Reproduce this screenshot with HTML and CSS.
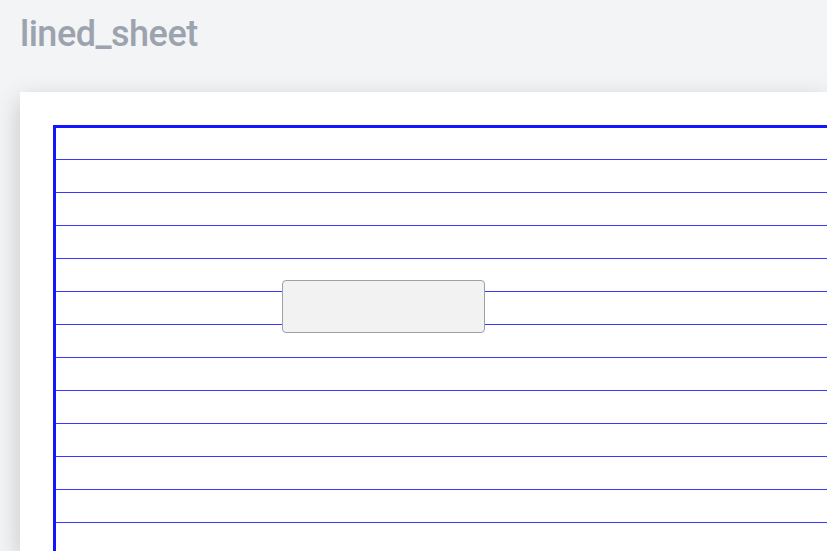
FILE: index.html
```html
<!DOCTYPE html>
<html lang="en">
<head>
<meta charset="utf-8">
<title>lined_sheet</title>
<link rel="stylesheet" href="styles.css">
</head>
<body>
<header class="page-header">
  <h1 class="page-title">lined_sheet</h1>
</header>
<main class="card">
  <div class="sheet">
    <input class="field" type="text" aria-label="text">
  </div>
</main>
</body>
</html>
```

FILE: styles.css
```css
html, body {
  margin: 0;
  padding: 0;
  height: 100%;
  overflow: hidden;
}
body {
  background: #f3f4f6;
  font-family: Roboto, "Liberation Sans", sans-serif;
  display: flex;
  flex-direction: column;
}
.page-header {
  padding: 14px 20px 0 20px;
  height: 92px;
  box-sizing: border-box;
  flex: none;
}
.page-title {
  margin: 0;
  font-size: 36px;
  line-height: 40px;
  font-weight: 500;
  color: #9ca3af;
  letter-spacing: -0.5px;
}
.card {
  flex: 1;
  margin-left: 20px;
  background: #ffffff;
  box-shadow: 0 8px 24px rgba(0, 0, 0, 0.2);
  padding: 33px 0 0 33px;
  box-sizing: border-box;
  display: flex;
  min-height: 0;
}
.sheet {
  flex: 1;
  position: relative;
  border: 3px solid #1414ff;
  border-right: none;
  border-bottom: none;
  background-image: repeating-linear-gradient(
    to bottom,
    transparent 0,
    transparent 31px,
    #3838ff 31px,
    #3838ff 32px,
    transparent 32px,
    transparent 33px
  );
}
.field {
  position: absolute;
  left: 226px;
  top: 152px;
  width: 203px;
  height: 53px;
  box-sizing: border-box;
  margin: 0;
  padding: 0 8px;
  background: #f2f2f3;
  border: 1px solid #9ca0a8;
  border-radius: 4px;
  outline: none;
  font-family: Roboto, "Liberation Sans", sans-serif;
  font-size: 16px;
}
```
